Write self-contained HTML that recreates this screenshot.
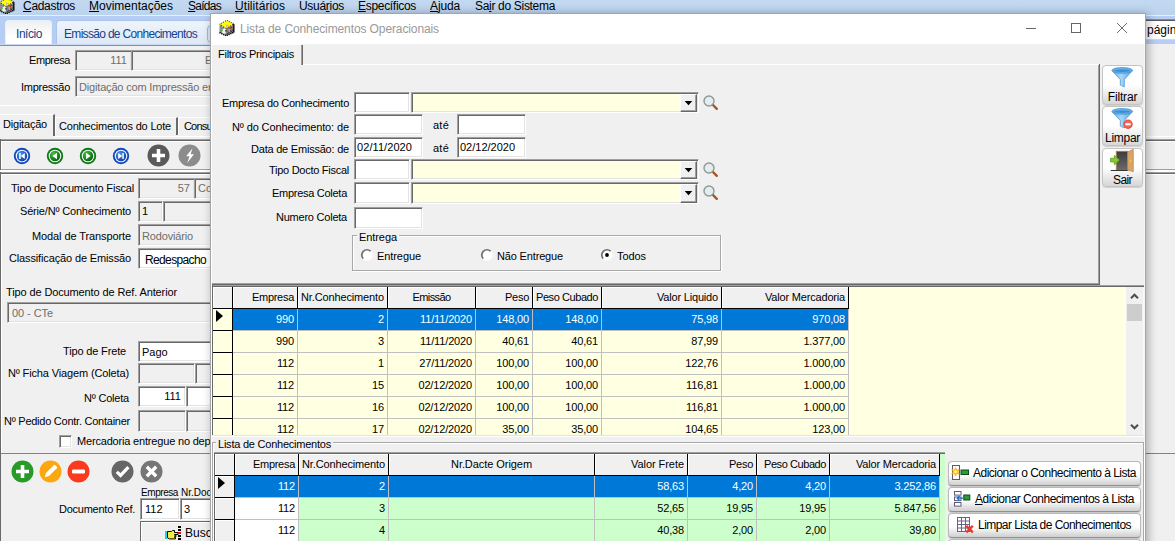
<!DOCTYPE html>
<html lang="pt-BR"><head><meta charset="utf-8"><title>Lista de Conhecimentos Operacionais</title>
<style>
*{box-sizing:border-box;margin:0;padding:0}
html,body{width:1175px;height:541px;overflow:hidden;background:#f0f0f0}
body{position:relative;font-family:"Liberation Sans",sans-serif;font-size:11px;color:#000}
div,span.t,svg{position:absolute}
span.t{white-space:nowrap;line-height:1;display:block}
.menu{font-size:12px;color:#000}
.tabx{font-size:12px;color:#15428b}
.ar{font-size:11px}
.ar12{font-size:12px}
.th{font-size:11px}
.g{color:#6d6d6d}
.w{color:#fff}
.title{font-size:12px;color:#999}
.btn{font-size:12px}
.sunk{border:1px solid;border-color:#a0a0a0 #fff #fff #a0a0a0;box-shadow:inset 1px 1px 0 #696969,inset -1px -1px 0 #e3e3e3;background:#fff}
.sunk.dis{background:#f0f0f0}
.sunk.y{background:#ffffe1}
.hc{background:#f0f0f0;border-right:1px solid #000;border-bottom:1px solid #000;box-shadow:inset 1px 1px 0 #fff}
.xb{border:1px solid #b9b9b9;border-bottom-color:#909090;border-radius:4px;background:linear-gradient(#ffffff 0%,#ffffff 55%,#cfcfcf 100%);box-shadow:0 1px 1px rgba(0,0,0,.18)}
.xb2{border:1px solid #c4c4c4;border-radius:4px;background:linear-gradient(#ffffff 0%,#ffffff 50%,#d6d6d6 100%);box-shadow:0 1px 0 rgba(0,0,0,.12)}
u{text-decoration:underline}
</style></head>
<body>
<div style="left:0px;top:0px;width:1175px;height:15px;background:linear-gradient(#c3d9f1,#bcd3ee)"></div>
<div style="left:0px;top:15px;width:1175px;height:1px;background:#e9eff8"></div>
<div style="left:0px;top:16px;width:1175px;height:28px;background:#b6cef4"></div>
<div style="left:0px;top:44px;width:211px;height:1px;background:#c8daf3"></div>
<div style="left:0px;top:45px;width:211px;height:1px;background:#8e8e8e"></div>
<svg style="left:-1px;top:-2px" width="16" height="16" viewBox="0 0 16 16">
<polygon points="0.500,4.500 7,8.500 7,15.500 0.500,12.500" fill="#8c8c8c"/>
<polygon points="7,8.500 15.300,4.200 15.300,12.300 7,15.800" fill="#7e7e7e"/>
<polygon points="7.800,0.300 14.800,3.800 7,8.700 0.800,4.200" fill="#ffff00"/>
<polygon points="7.800,0.300 14.800,3.800 7,8.700 0.800,4.200" fill="none" stroke="#111" stroke-width="1" stroke-dasharray="1 1.200"/>
<path d="M14.800 4v8.300" stroke="#000" stroke-width="1.200"/>
<path d="M0.500 12.500L7 15.700l8.300-3.500" fill="none" stroke="#000" stroke-width="1.600" stroke-dasharray="1.200 .8"/>
<path d="M8.500 13.500l5.500-2.500M9 12l4.500-2" stroke="#111" stroke-width="1" stroke-dasharray="1 1.100"/>
<polygon points="3.800,9.300 5.800,8 7.200,10 6.600,13.600 4.200,13.800 2.800,12" fill="#efefef"/>
<rect x="6.200" y="10.200" width="1.300" height="1.300" fill="#111"/>
<rect x="9.500" y="8.800" width="1.600" height="3.400" fill="#a9a9a9"/>
<rect x="2" y="10" width="1.500" height="1.500" fill="#10e010"/>
<rect x="10.500" y="7.600" width="1.500" height="1.200" fill="#f01010"/><rect x="11.600" y="6.800" width="1.600" height="1.200" fill="#f01010"/>
<path d="M7.500 4.500v3.500M7.500 5.500h2.500" stroke="#b9b9b9" stroke-width=".9" fill="none"/>
</svg>
<span id="t0" class="t menu" style="left:23px;top:-0.4px;letter-spacing:-0.300px;"><u>C</u>adastros</span>
<span id="t1" class="t menu" style="left:89px;top:-0.4px;letter-spacing:-0.004px;"><u>M</u>ovimentações</span>
<span id="t2" class="t menu" style="left:188px;top:-0.4px;letter-spacing:-0.729px;"><u>S</u>aídas</span>
<span id="t3" class="t menu" style="left:235px;top:-0.4px;letter-spacing:0.058px;"><u>U</u>tilitários</span>
<span id="t4" class="t menu" style="left:299px;top:-0.4px;letter-spacing:-0.295px;">Usuá<u>r</u>ios</span>
<span id="t5" class="t menu" style="left:358px;top:-0.4px;letter-spacing:-0.307px;"><u>E</u>specíficos</span>
<span id="t6" class="t menu" style="left:430px;top:-0.4px;letter-spacing:-0.141px;"><u>A</u>juda</span>
<span id="t7" class="t menu" style="left:475px;top:-0.4px;letter-spacing:-0.315px;">Sa<u>i</u>r do Sistema</span>
<div style="left:5px;top:20px;width:47px;height:24px;border-radius:4px 4px 0 0;background:linear-gradient(#efefef,#ffffff 70%);border:1px solid #dff5fd;border-bottom:none"></div>
<span id="t8" class="t tabx" style="left:16px;top:28.3px;letter-spacing:-0.448px;">Início</span>
<div style="left:56px;top:20px;width:175px;height:24px;border-radius:4px 4px 0 0;background:linear-gradient(#eef4fc,#dde8f7);border:1px solid #a9c4ee;border-bottom:none"></div>
<span id="t9" class="t tabx" style="left:64px;top:28.3px;letter-spacing:-0.684px;">Emissão de Conhecimentos</span>
<div style="left:207px;top:25px;width:16px;height:18px;border-radius:4px;background:#dbe7f8;border:1px solid #9cb8e6"></div>
<div style="left:1140px;top:19px;width:40px;height:1px;background:#8a8a8a"></div>
<div style="left:1140px;top:20px;width:40px;height:1px;background:#5a5a5a"></div>
<div style="left:1140px;top:21px;width:40px;height:18px;background:#fff"></div>
<div style="left:1140px;top:39px;width:40px;height:1px;background:#d8d8d8"></div>
<span id="t10" class="t ar12" style="left:1147px;top:24.3px;color:#9aa4b3letter-spacing:-0.841px;">página</span>
<span id="t11" class="t ar" style="right:1105px;top:55.3px;letter-spacing:-0.433px;">Empresa</span>
<div class="sunk dis" style="left:75px;top:50px;width:57px;height:21px;"></div>
<span id="t12" class="t ar g" style="right:1048px;top:55.3px;">111</span>
<div class="sunk dis" style="left:131px;top:50px;width:121px;height:21px;"></div>
<span id="t13" class="t ar g" style="left:205px;top:55.3px;">E</span>
<span id="t14" class="t ar" style="right:1105px;top:81.8px;letter-spacing:-0.262px;">Impressão</span>
<div class="sunk dis" style="left:75px;top:76px;width:181px;height:21px;"></div>
<span id="t15" class="t ar g" style="left:79px;top:81.8px;letter-spacing:-0.171px;">Digitação com Impressão em</span>
<div style="left:0px;top:105px;width:260px;height:1px;background:#fff"></div>
<div style="left:0px;top:114px;width:55px;height:22px;border-top:1px solid #fff;border-right:2px solid #696969;background:#f0f0f0"></div>
<span id="t16" class="t ar" style="left:3px;top:119.3px;letter-spacing:-0.207px;">Digitação</span>
<div style="left:55px;top:117px;width:123px;height:18px;border-top:1px solid #fff;border-left:1px solid #fff;border-right:2px solid #696969"></div>
<span id="t17" class="t ar" style="left:59px;top:121.3px;letter-spacing:-0.199px;">Conhecimentos do Lote</span>
<div style="left:178px;top:117px;width:60px;height:18px;border-top:1px solid #fff;border-left:1px solid #fff"></div>
<span id="t18" class="t ar" style="left:184px;top:121.3px;letter-spacing:-0.822px;">Consulta</span>
<div style="left:55px;top:136px;width:205px;height:1px;background:#fff"></div>
<div style="left:0px;top:139px;width:260px;height:1px;background:#a0a0a0"></div>
<div style="left:0px;top:140px;width:260px;height:1px;background:#696969"></div>
<div style="left:0px;top:141px;width:260px;height:1px;background:#fff"></div>
<div style="left:0px;top:169px;width:260px;height:1px;background:#a0a0a0"></div>
<div style="left:0px;top:170px;width:260px;height:2px;background:#fff"></div>
<div style="left:0px;top:172px;width:260px;height:1px;background:#a0a0a0"></div>
<div style="left:0px;top:173px;width:260px;height:1px;background:#696969"></div>
<div style="left:0px;top:174px;width:260px;height:1px;background:#fff"></div>
<div style="left:0px;top:453px;width:260px;height:1px;background:#828282"></div>
<div style="left:1146px;top:136px;width:40px;height:1px;background:#fff"></div>
<div style="left:1146px;top:139px;width:40px;height:1px;background:#a0a0a0"></div>
<div style="left:1146px;top:140px;width:40px;height:1px;background:#696969"></div>
<div style="left:1146px;top:141px;width:40px;height:1px;background:#fff"></div>
<div style="left:1146px;top:169px;width:40px;height:1px;background:#a0a0a0"></div>
<div style="left:1146px;top:170px;width:40px;height:2px;background:#fff"></div>
<div style="left:1146px;top:172px;width:40px;height:1px;background:#a0a0a0"></div>
<div style="left:1146px;top:173px;width:40px;height:1px;background:#696969"></div>
<div style="left:1146px;top:174px;width:40px;height:1px;background:#fff"></div>
<div style="left:1146px;top:453px;width:40px;height:1px;background:#828282"></div>
<div style="left:0px;top:139px;width:1px;height:31px;background:#696969"></div>
<div style="left:1px;top:141px;width:1px;height:28px;background:#fff"></div>
<div style="left:0px;top:172px;width:1px;height:400px;background:#696969"></div>
<div style="left:1px;top:174px;width:1px;height:279px;background:#fff"></div>
<svg width="0" height="0"><defs><radialGradient id="nb" cx=".35" cy=".3" r=".8"><stop offset="0" stop-color="#4a98f5"/><stop offset="1" stop-color="#0a34a0"/></radialGradient><radialGradient id="ng" cx=".35" cy=".3" r=".8"><stop offset="0" stop-color="#3fc53f"/><stop offset="1" stop-color="#075a07"/></radialGradient></defs></svg>
<svg style="left:13px;top:146.5px" width="18" height="18" viewBox="0 0 18 18"><circle cx="9" cy="9" r="8.200" fill="#0f48c0"/><circle cx="9" cy="9" r="6.300" fill="#f2f7fd"/><circle cx="9" cy="9" r="5.200" fill="url(#nb)"/><path d="M11.800 6v6l-4-3z M6.200 6h1.500v6H6.200z" fill="#fff"/></svg>
<svg style="left:46px;top:146.5px" width="18" height="18" viewBox="0 0 18 18"><circle cx="9" cy="9" r="8.200" fill="#0b7a10"/><circle cx="9" cy="9" r="6.300" fill="#f2f7fd"/><circle cx="9" cy="9" r="5.200" fill="url(#ng)"/><path d="M11 5.800v6.400l-4.600-3.200z" fill="#fff"/></svg>
<svg style="left:79px;top:146.5px" width="18" height="18" viewBox="0 0 18 18"><circle cx="9" cy="9" r="8.200" fill="#0b7a10"/><circle cx="9" cy="9" r="6.300" fill="#f2f7fd"/><circle cx="9" cy="9" r="5.200" fill="url(#ng)"/><path d="M7 5.800v6.400l4.600-3.200z" fill="#fff"/></svg>
<svg style="left:112px;top:146.5px" width="18" height="18" viewBox="0 0 18 18"><circle cx="9" cy="9" r="8.200" fill="#0f48c0"/><circle cx="9" cy="9" r="6.300" fill="#f2f7fd"/><circle cx="9" cy="9" r="5.200" fill="url(#nb)"/><path d="M6.200 6v6l4-3z M10.300 6h1.500v6h-1.500z" fill="#fff"/></svg>
<svg style="left:146.500px;top:144px" width="23" height="23" viewBox="0 0 23 23"><circle cx="11.5" cy="11.5" r="11" fill="#5a5a5a"/><path d="M9.700 5h3.600v4.700H18v3.600h-4.700V18H9.700v-4.700H5V9.700h4.700z" fill="#fff"/></svg>
<svg style="left:177.500px;top:144px" width="23" height="23" viewBox="0 0 23 23"><circle cx="11.500" cy="11.5" r="11" fill="#8c8c8c"/><path d="M14.500 4.200l-6.300 8h3.300l-2.300 6.800 6.800-8.800h-3.400z" fill="#fff"/></svg>
<span id="t19" class="t ar" style="right:1041px;top:183.3px;letter-spacing:-0.182px;">Tipo de Documento Fiscal</span>
<div class="sunk dis" style="left:138px;top:178px;width:57px;height:21px;"></div>
<span id="t20" class="t ar g" style="right:985px;top:183.3px;">57</span>
<div class="sunk dis" style="left:194px;top:178px;width:61px;height:21px;"></div>
<span id="t21" class="t ar g" style="left:198px;top:183.3px;">Co</span>
<span id="t22" class="t ar" style="right:1044px;top:206.3px;letter-spacing:-0.176px;">Série/Nº Conhecimento</span>
<div class="sunk dis" style="left:138px;top:201px;width:25px;height:21px;"></div>
<span id="t23" class="t ar" style="left:142px;top:206.3px;">1</span>
<div class="sunk dis" style="left:163px;top:201px;width:91px;height:21px;"></div>
<span id="t24" class="t ar" style="right:1044px;top:230.8px;letter-spacing:-0.100px;">Modal de Transporte</span>
<div class="sunk dis" style="left:138px;top:224px;width:121px;height:22px;"></div>
<span id="t25" class="t ar g" style="left:142px;top:230.8px;letter-spacing:-0.159px;">Rodoviário</span>
<span id="t26" class="t ar" style="right:1044px;top:252.8px;letter-spacing:-0.139px;">Classificação de Emissão</span>
<div class="sunk" style="left:138px;top:248px;width:121px;height:21px;"></div>
<span id="t27" class="t ar12" style="left:145px;top:253.8px;letter-spacing:-0.639px;">Redespacho</span>
<span id="t28" class="t ar" style="left:6px;top:286.8px;letter-spacing:-0.120px;">Tipo de Documento de Ref. Anterior</span>
<div class="sunk dis" style="left:7px;top:302px;width:251px;height:21px;"></div>
<span id="t29" class="t ar g" style="left:12px;top:308.3px;letter-spacing:-0.072px;">00 - CTe</span>
<span id="t30" class="t ar" style="right:1049px;top:345.8px;letter-spacing:-0.155px;">Tipo de Frete</span>
<div class="sunk" style="left:138px;top:341px;width:121px;height:21px;"></div>
<span id="t31" class="t ar" style="left:142px;top:346.8px;">Pago</span>
<span id="t32" class="t ar" style="right:1046px;top:367.8px;letter-spacing:-0.135px;">Nº Ficha Viagem (Coleta)</span>
<div class="sunk dis" style="left:138px;top:363px;width:57px;height:21px;"></div>
<div class="sunk dis" style="left:195px;top:363px;width:61px;height:21px;"></div>
<span id="t33" class="t ar" style="right:1046px;top:392.8px;letter-spacing:-0.203px;">Nº Coleta</span>
<div class="sunk" style="left:138px;top:386px;width:48px;height:21px;"></div>
<span id="t34" class="t ar" style="right:994px;top:391.3px;">111</span>
<div class="sunk" style="left:186px;top:386px;width:61px;height:21px;"></div>
<span id="t35" class="t ar" style="right:1045px;top:415.8px;letter-spacing:-0.248px;">Nº Pedido Contr. Container</span>
<div class="sunk dis" style="left:138px;top:410px;width:48px;height:22px;"></div>
<div class="sunk dis" style="left:186px;top:410px;width:61px;height:22px;"></div>
<div class="sunk" style="left:59px;top:435px;width:13px;height:13px;"></div>
<span id="t36" class="t ar" style="left:77px;top:436.3px;letter-spacing:-0.181px;">Mercadoria entregue no depósito</span>
<svg style="left:11.0px;top:459.5px" width="23" height="23" viewBox="0 0 23 23"><circle cx="11.5" cy="11.5" r="11" fill="#279a27"/><path d="M9.700 5h3.600v4.700H18v3.600h-4.700V18H9.700v-4.700H5V9.700h4.700z" fill="#fff"/></svg>
<svg style="left:39.0px;top:459.5px" width="23" height="23" viewBox="0 0 23 23"><circle cx="11.5" cy="11.5" r="11" fill="#fba70f"/><path d="M5.800 17.200l1.200-4.200 7.800-7.800a1 1 0 0 1 1.400 0l1.600 1.600a1 1 0 0 1 0 1.400l-7.800 7.800z" fill="#fff"/></svg>
<svg style="left:67.0px;top:459.5px" width="23" height="23" viewBox="0 0 23 23"><circle cx="11.5" cy="11.5" r="11" fill="#f93a1f"/><rect x="5" y="9.600" width="13" height="3.800" rx="1.200" fill="#fff"/></svg>
<svg style="left:111.0px;top:459.5px" width="23" height="23" viewBox="0 0 23 23"><circle cx="11.5" cy="11.5" r="11" fill="#666666"/><path d="M5.800 11.800l3.800 3.600 7.800-8.200" stroke="#fff" stroke-width="3.200" fill="none"/></svg>
<svg style="left:139.5px;top:459.5px" width="23" height="23" viewBox="0 0 23 23"><circle cx="11.5" cy="11.5" r="11" fill="#767676"/><path d="M6.800 6.800l9.400 9.400M16.200 6.800l-9.400 9.400" stroke="#fff" stroke-width="3.400" fill="none"/></svg>
<span id="t37" class="t ar" style="left:141px;top:488.4px;font-size:10px;letter-spacing:-0.431px;">Empresa</span>
<span id="t38" class="t ar" style="left:181px;top:488.4px;font-size:10px;">Nr.Docto</span>
<span id="t39" class="t ar" style="right:1040px;top:503.8px;letter-spacing:-0.249px;">Documento Ref.</span>
<div class="sunk" style="left:140px;top:498px;width:40px;height:22px;"></div>
<span id="t40" class="t ar" style="left:145px;top:504.3px;">112</span>
<div class="sunk" style="left:180px;top:498px;width:61px;height:22px;"></div>
<span id="t41" class="t ar" style="left:184px;top:504.3px;">3</span>
<div style="left:140px;top:521px;width:112px;height:24px;background:#f0f0f0;border:1px solid #696969;box-shadow:inset 1px 1px 0 #fff"></div>
<svg style="left:165px;top:529px" width="17" height="12" viewBox="0 0 17 12"><rect x="0" y="2" width="2" height="8" fill="#19d3e8"/><path d="M2.500 2.500h4l1-1h2v2h3.500v2H9.500v.700h1.500v1.500H9.500v.700h1v1.500H4.500l-2-1z" fill="#f4ee3a" stroke="#000" stroke-width="1"/></svg>
<div style="left:178.3px;top:526.3px;width:2.6px;height:1.6px;background:#000"></div>
<div style="left:178.3px;top:529.3px;width:2.6px;height:1.6px;background:#000"></div>
<div style="left:178.3px;top:532.2px;width:2.6px;height:1.6px;background:#e01010"></div>
<div style="left:178.3px;top:535.1px;width:2.6px;height:1.6px;background:#000"></div>
<div style="left:178.3px;top:538.2px;width:2.6px;height:1.6px;background:#000"></div>
<span id="t42" class="t ar12" style="left:185px;top:527.3px;">Buscar</span>
<div id="dlg" style="left:210px;top:13px;width:936px;height:547px;background:#f0f0f0;border:1px solid #a4a5a7;box-shadow:2px 1px 9px rgba(0,0,0,.31)"></div>
<div style="left:211px;top:14px;width:934px;height:30px;background:#fff"></div>
<div style="left:211px;top:44px;width:1px;height:500px;background:#fff"></div>
<div style="left:1144px;top:44px;width:1px;height:500px;background:#f8f8f8"></div>
<svg style="left:219px;top:20px" width="16" height="16" viewBox="0 0 16 16">
<polygon points="0.500,4.500 7,8.500 7,15.500 0.500,12.500" fill="#8c8c8c"/>
<polygon points="7,8.500 15.300,4.200 15.300,12.300 7,15.800" fill="#7e7e7e"/>
<polygon points="7.800,0.300 14.800,3.800 7,8.700 0.800,4.200" fill="#ffff00"/>
<polygon points="7.800,0.300 14.800,3.800 7,8.700 0.800,4.200" fill="none" stroke="#111" stroke-width="1" stroke-dasharray="1 1.200"/>
<path d="M14.800 4v8.300" stroke="#000" stroke-width="1.200"/>
<path d="M0.500 12.500L7 15.700l8.300-3.500" fill="none" stroke="#000" stroke-width="1.600" stroke-dasharray="1.200 .8"/>
<path d="M8.500 13.500l5.500-2.500M9 12l4.500-2" stroke="#111" stroke-width="1" stroke-dasharray="1 1.100"/>
<polygon points="3.800,9.300 5.800,8 7.200,10 6.600,13.600 4.200,13.800 2.800,12" fill="#efefef"/>
<rect x="6.200" y="10.200" width="1.300" height="1.300" fill="#111"/>
<rect x="9.500" y="8.800" width="1.600" height="3.400" fill="#a9a9a9"/>
<rect x="2" y="10" width="1.500" height="1.500" fill="#10e010"/>
<rect x="10.500" y="7.600" width="1.500" height="1.200" fill="#f01010"/><rect x="11.600" y="6.800" width="1.600" height="1.200" fill="#f01010"/>
<path d="M7.500 4.500v3.500M7.500 5.500h2.500" stroke="#b9b9b9" stroke-width=".9" fill="none"/>
</svg>
<span id="t43" class="t title" style="left:240px;top:23.3px;letter-spacing:-0.108px;">Lista de Conhecimentos Operacionais</span>
<svg style="left:1020px;top:20px" width="112" height="16" viewBox="0 0 112 16"><path d="M6 8.500h10" stroke="#666" stroke-width="1"/><rect x="51.500" y="3.500" width="9" height="9" fill="none" stroke="#666"/><path d="M97 3l10 10M107 3l-10 10" stroke="#5a5a5a" stroke-width=".9"/></svg>
<div style="left:211px;top:44px;width:90px;height:21px;border-top:1px solid #fff"></div>
<div style="left:301px;top:45px;width:1px;height:20px;background:#a0a0a0"></div>
<div style="left:302px;top:45px;width:1px;height:20px;background:#696969"></div>
<span id="t44" class="t th" style="left:218px;top:48.8px;letter-spacing:-0.260px;">Filtros Principais</span>
<div style="left:303px;top:64px;width:796px;height:1px;background:#fff"></div>
<div style="left:1098px;top:65px;width:1px;height:219px;background:#a0a0a0"></div>
<div style="left:1099px;top:64px;width:1px;height:221px;background:#696969"></div>
<div style="left:212px;top:283px;width:887px;height:1px;background:#a0a0a0"></div>
<div style="left:212px;top:284px;width:888px;height:1px;background:#696969"></div>
<span id="t45" class="t th" style="right:826px;top:97.8px;letter-spacing:-0.274px;">Empresa do Conhecimento</span>
<div class="sunk" style="left:354px;top:92px;width:56px;height:21px;"></div>
<div class="sunk y" style="left:411px;top:92px;width:288px;height:21px;"></div>
<div style="left:680px;top:94px;width:17px;height:18px;background:#f0f0f0;border:1px solid;border-color:#fff #696969 #696969 #fff;box-shadow:inset -1px -1px 0 #a0a0a0"></div>
<svg style="left:684px;top:101px" width="9" height="5" viewBox="0 0 9 5"><path d="M0.700 0h7.600L4.500 4.200z" fill="#000"/></svg>
<svg style="left:702px;top:94px" width="18" height="18" viewBox="0 0 18 18"><path d="M10.500 10.500l4.300 4.300" stroke="#a8541f" stroke-width="2.400" stroke-linecap="round"/><circle cx="7" cy="7" r="5" fill="#e6ecec" stroke="#8a9a9a" stroke-width="1.400"/></svg>
<span id="t46" class="t th" style="right:826px;top:121.8px;letter-spacing:-0.118px;">Nº do Conhecimento: de</span>
<div class="sunk" style="left:354px;top:114px;width:69px;height:21px;"></div>
<span id="t47" class="t th" style="left:433px;top:120.3px;letter-spacing:0.234px;">até</span>
<div class="sunk" style="left:457px;top:114px;width:69px;height:21px;"></div>
<span id="t48" class="t th" style="right:826px;top:143.8px;letter-spacing:-0.217px;">Data de Emissão: de</span>
<div class="sunk" style="left:354px;top:137px;width:69px;height:21px;"></div>
<span id="t49" class="t th" style="left:357px;top:142.3px;letter-spacing:0.075px;">02/11/2020</span>
<span id="t50" class="t th" style="left:433px;top:142.8px;letter-spacing:0.234px;">até</span>
<div class="sunk" style="left:457px;top:137px;width:69px;height:21px;"></div>
<span id="t51" class="t th" style="left:460px;top:142.3px;letter-spacing:-0.006px;">02/12/2020</span>
<span id="t52" class="t th" style="right:826px;top:164.8px;letter-spacing:-0.268px;">Tipo Docto Fiscal</span>
<div class="sunk" style="left:354px;top:159px;width:56px;height:21px;"></div>
<div class="sunk y" style="left:411px;top:159px;width:288px;height:21px;"></div>
<div style="left:680px;top:161px;width:17px;height:18px;background:#f0f0f0;border:1px solid;border-color:#fff #696969 #696969 #fff;box-shadow:inset -1px -1px 0 #a0a0a0"></div>
<svg style="left:684px;top:168px" width="9" height="5" viewBox="0 0 9 5"><path d="M0.700 0h7.600L4.500 4.200z" fill="#000"/></svg>
<svg style="left:702px;top:161px" width="18" height="18" viewBox="0 0 18 18"><path d="M10.500 10.500l4.300 4.300" stroke="#a8541f" stroke-width="2.400" stroke-linecap="round"/><circle cx="7" cy="7" r="5" fill="#e6ecec" stroke="#8a9a9a" stroke-width="1.400"/></svg>
<span id="t53" class="t th" style="right:828px;top:187.8px;letter-spacing:-0.277px;">Empresa Coleta</span>
<div class="sunk" style="left:354px;top:182px;width:56px;height:22px;"></div>
<div class="sunk y" style="left:411px;top:182px;width:288px;height:22px;"></div>
<div style="left:680px;top:184px;width:17px;height:19px;background:#f0f0f0;border:1px solid;border-color:#fff #696969 #696969 #fff;box-shadow:inset -1px -1px 0 #a0a0a0"></div>
<svg style="left:684px;top:191px" width="9" height="5" viewBox="0 0 9 5"><path d="M0.700 0h7.600L4.500 4.200z" fill="#000"/></svg>
<svg style="left:702px;top:184px" width="18" height="18" viewBox="0 0 18 18"><path d="M10.500 10.500l4.300 4.300" stroke="#a8541f" stroke-width="2.400" stroke-linecap="round"/><circle cx="7" cy="7" r="5" fill="#e6ecec" stroke="#8a9a9a" stroke-width="1.400"/></svg>
<span id="t54" class="t th" style="right:828px;top:211.8px;letter-spacing:-0.230px;">Numero Coleta</span>
<div class="sunk" style="left:354px;top:207px;width:69px;height:22px;"></div>
<div style="left:352px;top:235px;width:369px;height:36px;border:1px solid #a8a8a8;box-shadow:1px 1px 0 #fff,inset 1px 1px 0 #fff"></div>
<div style="left:357px;top:230px;width:42px;height:12px;background:#f0f0f0"></div>
<span id="t55" class="t th" style="left:359px;top:231.8px;letter-spacing:-0.076px;">Entrega</span>
<svg style="left:359.8px;top:248px" width="14" height="14" viewBox="0 0 14 14"><circle cx="7" cy="7" r="4.800" fill="#fff"/><path d="M3.300 10.700A5.200 5.200 0 0 1 10.700 3.300" fill="none" stroke="#707070" stroke-width="1.700"/><path d="M10.700 3.300A5.200 5.200 0 0 1 3.300 10.700" fill="none" stroke="#fbfbfb" stroke-width="1.500"/></svg>
<span id="t56" class="t th" style="left:377px;top:250.8px;letter-spacing:-0.082px;">Entregue</span>
<svg style="left:479.8px;top:248px" width="14" height="14" viewBox="0 0 14 14"><circle cx="7" cy="7" r="4.800" fill="#fff"/><path d="M3.300 10.700A5.200 5.200 0 0 1 10.700 3.300" fill="none" stroke="#707070" stroke-width="1.700"/><path d="M10.700 3.300A5.200 5.200 0 0 1 3.300 10.700" fill="none" stroke="#fbfbfb" stroke-width="1.500"/></svg>
<span id="t57" class="t th" style="left:497px;top:250.8px;letter-spacing:-0.158px;">Não Entregue</span>
<svg style="left:599.8px;top:248px" width="14" height="14" viewBox="0 0 14 14"><circle cx="7" cy="7" r="4.800" fill="#fff"/><path d="M3.300 10.700A5.200 5.200 0 0 1 10.700 3.300" fill="none" stroke="#707070" stroke-width="1.700"/><path d="M10.700 3.300A5.200 5.200 0 0 1 3.300 10.700" fill="none" stroke="#fbfbfb" stroke-width="1.500"/><circle cx="7" cy="7" r="1.900" fill="#000"/></svg>
<span id="t58" class="t th" style="left:617px;top:250.8px;letter-spacing:-0.072px;">Todos</span>
<div class="xb2" style="left:1102px;top:65px;width:41px;height:40px;"></div>
<span id="t59" class="t btn" style="left:922.5px;width:400px;text-align:center;top:91.3px;letter-spacing:-0.167px;">Filtrar</span>
<div class="xb2" style="left:1102px;top:106px;width:41px;height:40px;"></div>
<span id="t60" class="t btn" style="left:922.5px;width:400px;text-align:center;top:131.6px;letter-spacing:-0.281px;">Limpar</span>
<div class="xb2" style="left:1102px;top:148px;width:41px;height:39px;"></div>
<span id="t61" class="t btn" style="left:922.5px;width:400px;text-align:center;top:174.3px;letter-spacing:-0.586px;">Sair</span>
<svg width="0" height="0"><defs><linearGradient id="fg" x1="0" x2="1"><stop offset="0" stop-color="#5aa9e6"/><stop offset=".45" stop-color="#a9d6f6"/><stop offset="1" stop-color="#4f9fe0"/></linearGradient><linearGradient id="dg" x1="0" x2="0" y1="0" y2="1"><stop offset="0" stop-color="#3c3c3c"/><stop offset="1" stop-color="#6a6a6a"/></linearGradient></defs></svg>
<svg style="left:1111px;top:67px" width="23" height="21" viewBox="0 0 23 21"><path d="M1 3.600L9.300 12.600V18l4 2V12.600L21.500 3.600z" fill="url(#fg)" stroke="#3f8fd0" stroke-width=".7"/><ellipse cx="11.250" cy="3.400" rx="10.300" ry="2.900" fill="#67b1ea" stroke="#3f8fd0" stroke-width=".7"/><ellipse cx="11.250" cy="3.700" rx="8.300" ry="1.300" fill="#3d8dd2"/></svg>
<svg style="left:1110.500px;top:107.500px" width="24" height="23" viewBox="0 0 24 23"><path d="M1 3.600L9.300 12.600V18l4 2V12.600L21.500 3.600z" fill="url(#fg)" stroke="#3f8fd0" stroke-width=".7"/><ellipse cx="11.250" cy="3.400" rx="10.300" ry="2.900" fill="#67b1ea" stroke="#3f8fd0" stroke-width=".7"/><ellipse cx="11.250" cy="3.700" rx="8.300" ry="1.300" fill="#3d8dd2"/><circle cx="17" cy="16.200" r="4.700" fill="#ea4b3c"/><circle cx="17" cy="16.200" r="3.600" fill="#f0685a"/><rect x="14.300" y="15.200" width="5.400" height="2" rx=".5" fill="#fff"/></svg>
<svg style="left:1109px;top:148px" width="26" height="25" viewBox="0 0 26 25"><rect x="7.300" y="3.300" width="11.400" height="19" fill="url(#dg)" stroke="#a87b4c" stroke-width=".9"/><polygon points="18.500,4 24.300,1.300 24.300,23.600 18.500,22.200" fill="#d9a468" stroke="#a8743c" stroke-width=".6"/><rect x="1.800" y="22" width="16.700" height="1" fill="#333"/><path d="M1.600 10.200h3.800V7.400l5 4.700-5 4.700V14H1.600z" fill="#86cb26" stroke="#4f9a10" stroke-width=".7"/><rect x="21" y="11.500" width="1.200" height="2.400" fill="#f6d24a"/></svg>
<div style="left:212px;top:285px;width:932px;height:150px;background:#ffffe1"></div>
<div style="left:212px;top:285px;width:932px;height:1px;background:#a0a0a0"></div>
<div style="left:212px;top:286px;width:932px;height:1px;background:#696969"></div>
<div style="left:212px;top:285px;width:1px;height:150px;background:#696969"></div>
<div class="hc" style="left:213px;top:287px;width:20px;height:22px;"></div>
<div class="hc" style="left:233px;top:287px;width:65px;height:22px;"></div>
<span id="t62" class="t th" style="right:881px;top:292.3px;letter-spacing:-0.290px;">Empresa</span>
<div class="hc" style="left:298px;top:287px;width:90px;height:22px;"></div>
<span id="t63" class="t th" style="right:791px;top:292.3px;letter-spacing:-0.133px;">Nr.Conhecimento</span>
<div class="hc" style="left:388px;top:287px;width:88px;height:22px;"></div>
<span id="t64" class="t th" style="left:231.5px;width:400px;text-align:center;top:292.3px;letter-spacing:-0.598px;">Emissão</span>
<div class="hc" style="left:476px;top:287px;width:57px;height:22px;"></div>
<span id="t65" class="t th" style="right:646px;top:292.3px;letter-spacing:-0.270px;">Peso</span>
<div class="hc" style="left:533px;top:287px;width:69px;height:22px;"></div>
<span id="t66" class="t th" style="right:577px;top:292.3px;letter-spacing:-0.425px;">Peso Cubado</span>
<div class="hc" style="left:602px;top:287px;width:120px;height:22px;"></div>
<span id="t67" class="t th" style="right:457px;top:292.3px;letter-spacing:-0.185px;">Valor Liquido</span>
<div class="hc" style="left:722px;top:287px;width:127px;height:22px;"></div>
<span id="t68" class="t th" style="right:330px;top:292.3px;letter-spacing:-0.185px;">Valor Mercadoria</span>
<div style="left:213px;top:309px;width:20px;height:22px;background:#ffffe1;border-right:1px solid #000;border-bottom:1px solid #000;box-shadow:inset 1px 1px 0 #fff"></div>
<div style="left:233px;top:309px;width:616px;height:21px;background:#0078d7"></div>
<svg style="left:216px;top:310px" width="7" height="12" viewBox="0 0 7 12"><path d="M0 0l7 6-7 6z" fill="#000"/></svg>
<div style="left:297px;top:309px;width:1px;height:22px;background:#c0c0c0"></div>
<span id="t69" class="t th w" style="right:881px;top:314.3px;letter-spacing:-.15px;">990</span>
<div style="left:387px;top:309px;width:1px;height:22px;background:#c0c0c0"></div>
<span id="t70" class="t th w" style="right:791px;top:314.3px;letter-spacing:-.15px;">2</span>
<div style="left:475px;top:309px;width:1px;height:22px;background:#c0c0c0"></div>
<span id="t71" class="t th w" style="right:703px;top:314.3px;letter-spacing:-.15px;">11/11/2020</span>
<div style="left:532px;top:309px;width:1px;height:22px;background:#c0c0c0"></div>
<span id="t72" class="t th w" style="right:646px;top:314.3px;letter-spacing:-.15px;">148,00</span>
<div style="left:601px;top:309px;width:1px;height:22px;background:#c0c0c0"></div>
<span id="t73" class="t th w" style="right:577px;top:314.3px;letter-spacing:-.15px;">148,00</span>
<div style="left:721px;top:309px;width:1px;height:22px;background:#c0c0c0"></div>
<span id="t74" class="t th w" style="right:457px;top:314.3px;letter-spacing:-.15px;">75,98</span>
<div style="left:848px;top:309px;width:1px;height:22px;background:#c0c0c0"></div>
<span id="t75" class="t th w" style="right:330px;top:314.3px;letter-spacing:-.15px;">970,08</span>
<div style="left:233px;top:330px;width:616px;height:1px;background:#c0c0c0"></div>
<div style="left:213px;top:331px;width:20px;height:22px;background:#ffffe1;border-right:1px solid #000;border-bottom:1px solid #000;box-shadow:inset 1px 1px 0 #fff"></div>
<div style="left:297px;top:331px;width:1px;height:22px;background:#c0c0c0"></div>
<span id="t76" class="t th" style="right:881px;top:336.3px;letter-spacing:-.15px;">990</span>
<div style="left:387px;top:331px;width:1px;height:22px;background:#c0c0c0"></div>
<span id="t77" class="t th" style="right:791px;top:336.3px;letter-spacing:-.15px;">3</span>
<div style="left:475px;top:331px;width:1px;height:22px;background:#c0c0c0"></div>
<span id="t78" class="t th" style="right:703px;top:336.3px;letter-spacing:-.15px;">11/11/2020</span>
<div style="left:532px;top:331px;width:1px;height:22px;background:#c0c0c0"></div>
<span id="t79" class="t th" style="right:646px;top:336.3px;letter-spacing:-.15px;">40,61</span>
<div style="left:601px;top:331px;width:1px;height:22px;background:#c0c0c0"></div>
<span id="t80" class="t th" style="right:577px;top:336.3px;letter-spacing:-.15px;">40,61</span>
<div style="left:721px;top:331px;width:1px;height:22px;background:#c0c0c0"></div>
<span id="t81" class="t th" style="right:457px;top:336.3px;letter-spacing:-.15px;">87,99</span>
<div style="left:848px;top:331px;width:1px;height:22px;background:#c0c0c0"></div>
<span id="t82" class="t th" style="right:330px;top:336.3px;letter-spacing:-.15px;">1.377,00</span>
<div style="left:233px;top:352px;width:616px;height:1px;background:#c0c0c0"></div>
<div style="left:213px;top:353px;width:20px;height:22px;background:#ffffe1;border-right:1px solid #000;border-bottom:1px solid #000;box-shadow:inset 1px 1px 0 #fff"></div>
<div style="left:297px;top:353px;width:1px;height:22px;background:#c0c0c0"></div>
<span id="t83" class="t th" style="right:881px;top:358.3px;letter-spacing:-.15px;">112</span>
<div style="left:387px;top:353px;width:1px;height:22px;background:#c0c0c0"></div>
<span id="t84" class="t th" style="right:791px;top:358.3px;letter-spacing:-.15px;">1</span>
<div style="left:475px;top:353px;width:1px;height:22px;background:#c0c0c0"></div>
<span id="t85" class="t th" style="right:703px;top:358.3px;letter-spacing:-.15px;">27/11/2020</span>
<div style="left:532px;top:353px;width:1px;height:22px;background:#c0c0c0"></div>
<span id="t86" class="t th" style="right:646px;top:358.3px;letter-spacing:-.15px;">100,00</span>
<div style="left:601px;top:353px;width:1px;height:22px;background:#c0c0c0"></div>
<span id="t87" class="t th" style="right:577px;top:358.3px;letter-spacing:-.15px;">100,00</span>
<div style="left:721px;top:353px;width:1px;height:22px;background:#c0c0c0"></div>
<span id="t88" class="t th" style="right:457px;top:358.3px;letter-spacing:-.15px;">122,76</span>
<div style="left:848px;top:353px;width:1px;height:22px;background:#c0c0c0"></div>
<span id="t89" class="t th" style="right:330px;top:358.3px;letter-spacing:-.15px;">1.000,00</span>
<div style="left:233px;top:374px;width:616px;height:1px;background:#c0c0c0"></div>
<div style="left:213px;top:375px;width:20px;height:22px;background:#ffffe1;border-right:1px solid #000;border-bottom:1px solid #000;box-shadow:inset 1px 1px 0 #fff"></div>
<div style="left:297px;top:375px;width:1px;height:22px;background:#c0c0c0"></div>
<span id="t90" class="t th" style="right:881px;top:380.3px;letter-spacing:-.15px;">112</span>
<div style="left:387px;top:375px;width:1px;height:22px;background:#c0c0c0"></div>
<span id="t91" class="t th" style="right:791px;top:380.3px;letter-spacing:-.15px;">15</span>
<div style="left:475px;top:375px;width:1px;height:22px;background:#c0c0c0"></div>
<span id="t92" class="t th" style="right:703px;top:380.3px;letter-spacing:-.15px;">02/12/2020</span>
<div style="left:532px;top:375px;width:1px;height:22px;background:#c0c0c0"></div>
<span id="t93" class="t th" style="right:646px;top:380.3px;letter-spacing:-.15px;">100,00</span>
<div style="left:601px;top:375px;width:1px;height:22px;background:#c0c0c0"></div>
<span id="t94" class="t th" style="right:577px;top:380.3px;letter-spacing:-.15px;">100,00</span>
<div style="left:721px;top:375px;width:1px;height:22px;background:#c0c0c0"></div>
<span id="t95" class="t th" style="right:457px;top:380.3px;letter-spacing:-.15px;">116,81</span>
<div style="left:848px;top:375px;width:1px;height:22px;background:#c0c0c0"></div>
<span id="t96" class="t th" style="right:330px;top:380.3px;letter-spacing:-.15px;">1.000,00</span>
<div style="left:233px;top:396px;width:616px;height:1px;background:#c0c0c0"></div>
<div style="left:213px;top:397px;width:20px;height:22px;background:#ffffe1;border-right:1px solid #000;border-bottom:1px solid #000;box-shadow:inset 1px 1px 0 #fff"></div>
<div style="left:297px;top:397px;width:1px;height:22px;background:#c0c0c0"></div>
<span id="t97" class="t th" style="right:881px;top:402.3px;letter-spacing:-.15px;">112</span>
<div style="left:387px;top:397px;width:1px;height:22px;background:#c0c0c0"></div>
<span id="t98" class="t th" style="right:791px;top:402.3px;letter-spacing:-.15px;">16</span>
<div style="left:475px;top:397px;width:1px;height:22px;background:#c0c0c0"></div>
<span id="t99" class="t th" style="right:703px;top:402.3px;letter-spacing:-.15px;">02/12/2020</span>
<div style="left:532px;top:397px;width:1px;height:22px;background:#c0c0c0"></div>
<span id="t100" class="t th" style="right:646px;top:402.3px;letter-spacing:-.15px;">100,00</span>
<div style="left:601px;top:397px;width:1px;height:22px;background:#c0c0c0"></div>
<span id="t101" class="t th" style="right:577px;top:402.3px;letter-spacing:-.15px;">100,00</span>
<div style="left:721px;top:397px;width:1px;height:22px;background:#c0c0c0"></div>
<span id="t102" class="t th" style="right:457px;top:402.3px;letter-spacing:-.15px;">116,81</span>
<div style="left:848px;top:397px;width:1px;height:22px;background:#c0c0c0"></div>
<span id="t103" class="t th" style="right:330px;top:402.3px;letter-spacing:-.15px;">1.000,00</span>
<div style="left:233px;top:418px;width:616px;height:1px;background:#c0c0c0"></div>
<div style="left:213px;top:419px;width:20px;height:16px;background:#ffffe1;border-right:1px solid #000;box-shadow:inset 1px 1px 0 #fff"></div>
<div style="left:297px;top:419px;width:1px;height:16px;background:#c0c0c0"></div>
<span id="t104" class="t th" style="right:881px;top:424.3px;letter-spacing:-.15px;">112</span>
<div style="left:387px;top:419px;width:1px;height:16px;background:#c0c0c0"></div>
<span id="t105" class="t th" style="right:791px;top:424.3px;letter-spacing:-.15px;">17</span>
<div style="left:475px;top:419px;width:1px;height:16px;background:#c0c0c0"></div>
<span id="t106" class="t th" style="right:703px;top:424.3px;letter-spacing:-.15px;">02/12/2020</span>
<div style="left:532px;top:419px;width:1px;height:16px;background:#c0c0c0"></div>
<span id="t107" class="t th" style="right:646px;top:424.3px;letter-spacing:-.15px;">35,00</span>
<div style="left:601px;top:419px;width:1px;height:16px;background:#c0c0c0"></div>
<span id="t108" class="t th" style="right:577px;top:424.3px;letter-spacing:-.15px;">35,00</span>
<div style="left:721px;top:419px;width:1px;height:16px;background:#c0c0c0"></div>
<span id="t109" class="t th" style="right:457px;top:424.3px;letter-spacing:-.15px;">104,65</span>
<div style="left:848px;top:419px;width:1px;height:16px;background:#c0c0c0"></div>
<span id="t110" class="t th" style="right:330px;top:424.3px;letter-spacing:-.15px;">123,00</span>
<div style="left:1126px;top:287px;width:17px;height:148px;background:#f0f0f0"></div>
<div style="left:1143px;top:287px;width:1px;height:148px;background:#fafafa"></div>
<div style="left:1127px;top:304px;width:15px;height:17px;background:#cdcdcd"></div>
<svg style="left:1130px;top:292px" width="9" height="8" viewBox="0 0 9 8"><path d="M1 6.300l3.500-3.600 3.500 3.600" fill="none" stroke="#4d4d4d" stroke-width="2"/></svg>
<svg style="left:1130px;top:423px" width="9" height="8" viewBox="0 0 9 8"><path d="M1 1.700l3.500 3.600 3.500-3.600" fill="none" stroke="#4d4d4d" stroke-width="2"/></svg>
<div style="left:212px;top:435px;width:932px;height:120px;background:#f0f0f0"></div>
<div style="left:212px;top:435px;width:932px;height:1px;background:#e3e3e3"></div>
<div style="left:212px;top:436px;width:932px;height:1px;background:#fff"></div>
<div style="left:212px;top:442px;width:932px;height:110px;border:1px solid #a8a8a8;box-shadow:1px 1px 0 #fff,inset 1px 1px 0 #fff"></div>
<div style="left:216px;top:437px;width:117px;height:12px;background:#f0f0f0"></div>
<span id="t111" class="t th" style="left:218px;top:438.8px;letter-spacing:-0.228px;">Lista de Conhecimentos</span>
<div style="left:214px;top:453px;width:731px;height:100px;background:#ccffcc"></div>
<div style="left:214px;top:452px;width:731px;height:1px;background:#a0a0a0"></div>
<div style="left:214px;top:453px;width:731px;height:1px;background:#696969"></div>
<div style="left:214px;top:453px;width:1px;height:100px;background:#696969"></div>
<div class="hc" style="left:215px;top:454px;width:20px;height:22px;"></div>
<div class="hc" style="left:235px;top:454px;width:64px;height:22px;"></div>
<span id="t112" class="t th" style="right:880px;top:459.3px;letter-spacing:-0.290px;">Empresa</span>
<div class="hc" style="left:299px;top:454px;width:90px;height:22px;"></div>
<span id="t113" class="t th" style="right:790px;top:459.3px;letter-spacing:-0.133px;">Nr.Conhecimento</span>
<div class="hc" style="left:389px;top:454px;width:206px;height:22px;"></div>
<span id="t114" class="t th" style="left:291.5px;width:400px;text-align:center;top:459.3px;letter-spacing:-0.061px;">Nr.Dacte Origem</span>
<div class="hc" style="left:595px;top:454px;width:93px;height:22px;"></div>
<span id="t115" class="t th" style="right:491px;top:459.3px;letter-spacing:-0.054px;">Valor Frete</span>
<div class="hc" style="left:688px;top:454px;width:69px;height:22px;"></div>
<span id="t116" class="t th" style="right:422px;top:459.3px;letter-spacing:-0.270px;">Peso</span>
<div class="hc" style="left:757px;top:454px;width:73px;height:22px;"></div>
<span id="t117" class="t th" style="right:349px;top:459.3px;letter-spacing:-0.425px;">Peso Cubado</span>
<div class="hc" style="left:830px;top:454px;width:110px;height:22px;"></div>
<span id="t118" class="t th" style="right:239px;top:459.3px;letter-spacing:-0.185px;">Valor Mercadoria</span>
<div style="left:215px;top:476px;width:20px;height:22px;background:#f0f0f0;border-right:1px solid #000;border-bottom:1px solid #000;box-shadow:inset 1px 1px 0 #fff"></div>
<div style="left:235px;top:476px;width:705px;height:22px;background:#0078d7"></div>
<svg style="left:218px;top:477px" width="7" height="12" viewBox="0 0 7 12"><path d="M0 0l7 6-7 6z" fill="#000"/></svg>
<div style="left:298px;top:476px;width:1px;height:22px;background:#c0c0c0"></div>
<span id="t119" class="t th w" style="right:880px;top:481.3px;letter-spacing:-.15px;">112</span>
<div style="left:388px;top:476px;width:1px;height:22px;background:#c0c0c0"></div>
<span id="t120" class="t th w" style="right:790px;top:481.3px;letter-spacing:-.15px;">2</span>
<div style="left:594px;top:476px;width:1px;height:22px;background:#c0c0c0"></div>
<div style="left:687px;top:476px;width:1px;height:22px;background:#c0c0c0"></div>
<span id="t121" class="t th w" style="right:491px;top:481.3px;letter-spacing:-.15px;">58,63</span>
<div style="left:756px;top:476px;width:1px;height:22px;background:#c0c0c0"></div>
<span id="t122" class="t th w" style="right:422px;top:481.3px;letter-spacing:-.15px;">4,20</span>
<div style="left:829px;top:476px;width:1px;height:22px;background:#c0c0c0"></div>
<span id="t123" class="t th w" style="right:349px;top:481.3px;letter-spacing:-.15px;">4,20</span>
<div style="left:939px;top:476px;width:1px;height:22px;background:#c0c0c0"></div>
<span id="t124" class="t th w" style="right:239px;top:481.3px;letter-spacing:-.15px;">3.252,86</span>
<div style="left:235px;top:497px;width:705px;height:1px;background:#c0c0c0"></div>
<div style="left:215px;top:498px;width:20px;height:22px;background:#f0f0f0;border-right:1px solid #000;border-bottom:1px solid #000;box-shadow:inset 1px 1px 0 #fff"></div>
<div style="left:235px;top:498px;width:63px;height:22px;background:#fff"></div>
<div style="left:298px;top:498px;width:1px;height:22px;background:#c0c0c0"></div>
<span id="t125" class="t th" style="right:880px;top:503.3px;letter-spacing:-.15px;">112</span>
<div style="left:388px;top:498px;width:1px;height:22px;background:#c0c0c0"></div>
<span id="t126" class="t th" style="right:790px;top:503.3px;letter-spacing:-.15px;">3</span>
<div style="left:594px;top:498px;width:1px;height:22px;background:#c0c0c0"></div>
<div style="left:687px;top:498px;width:1px;height:22px;background:#c0c0c0"></div>
<span id="t127" class="t th" style="right:491px;top:503.3px;letter-spacing:-.15px;">52,65</span>
<div style="left:756px;top:498px;width:1px;height:22px;background:#c0c0c0"></div>
<span id="t128" class="t th" style="right:422px;top:503.3px;letter-spacing:-.15px;">19,95</span>
<div style="left:829px;top:498px;width:1px;height:22px;background:#c0c0c0"></div>
<span id="t129" class="t th" style="right:349px;top:503.3px;letter-spacing:-.15px;">19,95</span>
<div style="left:939px;top:498px;width:1px;height:22px;background:#c0c0c0"></div>
<span id="t130" class="t th" style="right:239px;top:503.3px;letter-spacing:-.15px;">5.847,56</span>
<div style="left:235px;top:519px;width:705px;height:1px;background:#c0c0c0"></div>
<div style="left:215px;top:520px;width:20px;height:22px;background:#f0f0f0;border-right:1px solid #000;border-bottom:1px solid #000;box-shadow:inset 1px 1px 0 #fff"></div>
<div style="left:235px;top:520px;width:63px;height:22px;background:#fff"></div>
<div style="left:298px;top:520px;width:1px;height:22px;background:#c0c0c0"></div>
<span id="t131" class="t th" style="right:880px;top:525.3px;letter-spacing:-.15px;">112</span>
<div style="left:388px;top:520px;width:1px;height:22px;background:#c0c0c0"></div>
<span id="t132" class="t th" style="right:790px;top:525.3px;letter-spacing:-.15px;">4</span>
<div style="left:594px;top:520px;width:1px;height:22px;background:#c0c0c0"></div>
<div style="left:687px;top:520px;width:1px;height:22px;background:#c0c0c0"></div>
<span id="t133" class="t th" style="right:491px;top:525.3px;letter-spacing:-.15px;">40,38</span>
<div style="left:756px;top:520px;width:1px;height:22px;background:#c0c0c0"></div>
<span id="t134" class="t th" style="right:422px;top:525.3px;letter-spacing:-.15px;">2,00</span>
<div style="left:829px;top:520px;width:1px;height:22px;background:#c0c0c0"></div>
<span id="t135" class="t th" style="right:349px;top:525.3px;letter-spacing:-.15px;">2,00</span>
<div style="left:939px;top:520px;width:1px;height:22px;background:#c0c0c0"></div>
<span id="t136" class="t th" style="right:239px;top:525.3px;letter-spacing:-.15px;">39,80</span>
<div style="left:235px;top:541px;width:705px;height:1px;background:#c0c0c0"></div>
<div class="xb" style="left:948px;top:461px;width:193px;height:25px;"></div>
<span id="t137" class="t btn" style="left:973px;top:467.3px;letter-spacing:-0.514px;">Adicionar o Conhecimento à Lista</span>
<div class="xb" style="left:948px;top:487px;width:193px;height:25px;"></div>
<span id="t138" class="t btn" style="left:975px;top:493.3px;letter-spacing:-0.531px;"><u>A</u>dicionar Conhecimentos à Lista</span>
<div class="xb" style="left:948px;top:513px;width:193px;height:25px;"></div>
<span id="t139" class="t btn" style="left:978px;top:519.3px;letter-spacing:-0.544px;">Limpar Lista de Conhecimentos</span>
<div class="xb" style="left:948px;top:539px;width:193px;height:25px;"></div>
<svg style="left:950px;top:463px" width="20" height="19" viewBox="0 0 20 19"><rect x="2.500" y="2.500" width="7" height="14" fill="#fdfdfd" stroke="#5a5a6a" stroke-width="1"/><rect x="11" y="7" width="7.500" height="4.500" fill="#2a9a3a" stroke="#0d4d16" stroke-width="1"/><path d="M5.500 4.800l1.200 2.400 2.600-.7-1.500 2.300 1.500 2.300-2.600-.700L5.500 12.800 4.300 10.400 1.700 11.100 3.200 8.800 1.700 6.500l2.600.7z" fill="#ffd71f" stroke="#f0a000" stroke-width=".7"/><circle cx="5.500" cy="8.800" r="1.300" fill="#fff6a0"/></svg>
<svg style="left:953px;top:490px" width="20" height="19" viewBox="0 0 20 19"><rect x="1.500" y="1.500" width="6.500" height="3.600" fill="#fff" stroke="#5d5d78"/><rect x="1.500" y="7" width="6.500" height="3.600" fill="#fff" stroke="#5d5d78"/><rect x="1.500" y="12.500" width="6.500" height="3.600" fill="#fff" stroke="#5d5d78"/><rect x="10.800" y="5" width="6" height="5" fill="#2a9a3a" stroke="#0d4d16" stroke-width="1"/><path d="M10.500 8.200H4.200m2.300-2.300L4.200 8.200l2.300 2.300" fill="none" stroke="#1c6fd0" stroke-width="1.300"/></svg>
<svg style="left:956px;top:516px" width="20" height="19" viewBox="0 0 20 19"><rect x="1.500" y="1.500" width="12" height="14" fill="#fff" stroke="#6a5f8a"/><path d="M1.500 5h12M1.500 8.500h12M1.500 12h12M5.500 1.500v14M9.500 1.500v14" stroke="#6a5f8a" stroke-width="1"/><path d="M10.300 9.800l6.500 6.500M16.800 9.800l-6.500 6.500" stroke="#e8392b" stroke-width="2.400"/></svg>
</body></html>
